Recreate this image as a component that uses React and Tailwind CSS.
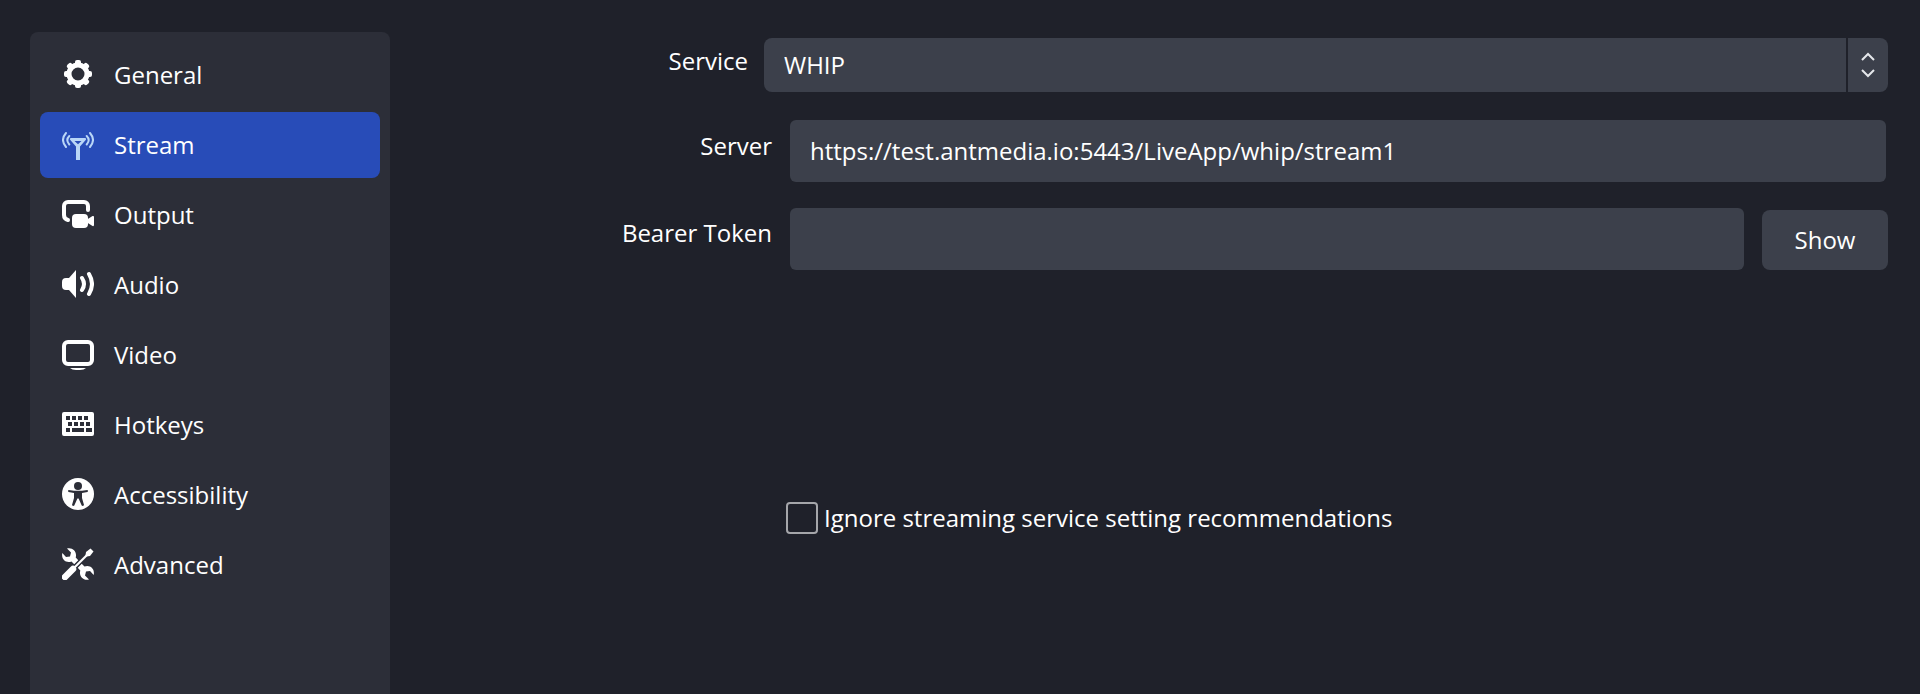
const GeneralIcon = () => (
  <svg viewBox="0 0 32 32" className="mb-0.5 size-8" aria-hidden="true">
    <circle cx="16" cy="16" r="9" fill="none" stroke="currentColor" strokeWidth="5" />
    {[0, 45, 90, 135, 180, 225, 270, 315].map((angle) => (
      <rect
        key={angle}
        x="13"
        y="2"
        width="6"
        height="6"
        rx="2"
        fill="currentColor"
        transform={`rotate(${angle} 16 16)`}
      />
    ))}
  </svg>
);

const StreamIcon = () => (
  <svg viewBox="0 0 32 32" className="mb-0.5 size-8 text-[#b9d6f7]" aria-hidden="true">
    <path
      fill="currentColor"
      fillRule="evenodd"
      d="M9 10H23C24.2 10 24.4 11.3 23.7 12L18 18.5V32H14V18.5L8.3 12C7.6 11.3 7.8 10 9 10ZM12.5 13L16 16.2L19.5 13Z"
    />
    <g fill="none" stroke="currentColor" strokeWidth="2" strokeLinecap="round">
      <path d="M4 5Q-2 12 4 19M7.3 8Q3.3 12 7.3 16.5" />
      <path d="M28 5Q34 12 28 19M24.7 8Q28.7 12 24.7 16.5" />
    </g>
  </svg>
);

const OutputIcon = () => (
  <svg viewBox="0 0 32 32" className="mb-0.5 size-8" aria-hidden="true">
    <path
      d="M26 12V8A4 4 0 0 0 22 4H6A4 4 0 0 0 2 8V17Q2 21 6 22"
      fill="none"
      stroke="currentColor"
      strokeWidth="4"
      strokeLinecap="round"
    />
    <rect x="10" y="16" width="16" height="14" rx="4" fill="currentColor" />
    <path d="M25 21.5L30.5 18Q32 17.5 32 19V27Q32 28.5 30.5 28L25 24.5Z" fill="currentColor" />
  </svg>
);

const AudioIcon = () => (
  <svg viewBox="0 0 32 32" className="mb-0.5 size-8" aria-hidden="true">
    <path d="M14 2V30L7 22H4Q0 22 0 18V14Q0 10 4 10H7Z" fill="currentColor" />
    <path
      d="M20 10Q24 16 20 22M27 6Q33 16 27 26"
      fill="none"
      stroke="currentColor"
      strokeWidth="4"
      strokeLinecap="round"
    />
  </svg>
);

const VideoIcon = () => (
  <svg viewBox="0 0 32 32" className="mb-0.5 size-8" aria-hidden="true">
    <rect x="2" y="4" width="28" height="22" rx="4" fill="none" stroke="currentColor" strokeWidth="4" />
    <path d="M8 30H24Q22 32 18 32H14Q10 32 8 30Z" fill="currentColor" />
  </svg>
);

const HotkeysIcon = () => (
  <svg viewBox="0 0 32 32" className="mb-0.5 size-8" aria-hidden="true">
    <path
      fill="currentColor"
      fillRule="evenodd"
      d="M2 4H30Q32 4 32 6V26Q32 28 30 28H2Q0 28 0 26V6Q0 4 2 4ZM4 8V12H8V8ZM10 8V12H14V8ZM16 8V12H20V8ZM22 8V12H26V8ZM6 14V18H10V14ZM12 14V18H16V14ZM18 14V18H22V14ZM24 14V18H28V14ZM4 20V24H8V20ZM10 20V24H22V20ZM24 20V24H30V20Z"
    />
  </svg>
);

const AccessibilityIcon = () => (
  <svg viewBox="0 0 32 32" className="mb-0.5 size-8" aria-hidden="true">
    <circle cx="16" cy="16" r="16" fill="currentColor" />
    <g className="fill-[#2c2e38]">
      <circle cx="16" cy="8" r="4" />
      <path d="M6.5 12L12 12.7H20L25.5 12Q26.5 13 25.5 14L20 15V20L22 27Q21 28.5 19.7 27.5L16.6 20.5H15.4L12.3 27.5Q11 28.5 10 27L12 20V15L6.5 14Q5.5 13 6.5 12Z" />
    </g>
  </svg>
);

const wrench =
  "M5 0.4C11-1 15.3 4 13.7 9.5L16.5 12.5L12.5 16.5L9.5 13.5C4 15.5-1 11.5 0.3 5L4 9L8 8.6L9 4.5Z";

const AdvancedIcon = () => (
  <svg viewBox="0 0 32 32" className="mb-0.5 size-8" aria-hidden="true">
    <path d={wrench} fill="currentColor" />
    <path d={wrench} fill="currentColor" transform="rotate(180 16 16)" />
    <path d="M10 22L27 5" className="stroke-[#2c2e38]" strokeWidth="5" />
    <path d="M3 29L11 21" stroke="currentColor" strokeWidth="6.5" strokeLinecap="round" />
    <path d="M11 21L27 5" stroke="currentColor" strokeWidth="2.2" />
    <path d="M24 4L28.5 0.5L31.5 3.5L28 8L24.5 8.5L23.5 7.5Z" fill="currentColor" />
  </svg>
);

const sections = [
  { name: "General", Icon: GeneralIcon },
  { name: "Stream", Icon: StreamIcon },
  { name: "Output", Icon: OutputIcon },
  { name: "Audio", Icon: AudioIcon },
  { name: "Video", Icon: VideoIcon },
  { name: "Hotkeys", Icon: HotkeysIcon },
  { name: "Accessibility", Icon: AccessibilityIcon },
  { name: "Advanced", Icon: AdvancedIcon },
];

const Sidebar = ({ active }) => (
  <nav className="mt-8 w-[360px] shrink-0 rounded-t-lg bg-[#2c2e38] p-2.5">
    <ul className="flex flex-col gap-1">
      {sections.map(({ name, Icon }) => (
        <li key={name}>
          <button
            type="button"
            className={`flex h-[66px] w-full items-center gap-5 rounded-lg pl-[22px] text-left ${
              name === active ? "bg-[#284cb8]" : ""
            }`}
          >
            <Icon />
            {name}
          </button>
        </li>
      ))}
    </ul>
  </nav>
);

const StreamSettings = () => (
  <form className="flex min-w-0 flex-1 flex-col pt-[38px] pr-8">
    <div className="flex items-center gap-4">
      <label htmlFor="service" className="w-[358px] shrink-0 pb-2 text-right">
        Service
      </label>
      <div className="relative min-w-0 flex-1">
        <select
          id="service"
          className="block h-[54px] w-full appearance-none rounded-lg bg-[#3c404b] pr-14 pl-5"
        >
          <option>WHIP</option>
        </select>
        <span className="pointer-events-none absolute inset-y-0 right-0 flex w-[42px] items-center justify-center border-l-2 border-[#1f212a] text-gray-200">
          <svg width="14" height="26" viewBox="0 0 14 26" fill="none" stroke="currentColor" strokeWidth="2">
            <path d="M1 8L7 2L13 8M1 18L7 24L13 18" />
          </svg>
        </span>
      </div>
    </div>

    <div className="mt-7 flex items-center gap-[18px] pr-0.5">
      <label htmlFor="server" className="w-[382px] shrink-0 pb-2.5 text-right">
        Server
      </label>
      <input
        id="server"
        type="text"
        defaultValue="https://test.antmedia.io:5443/LiveApp/whip/stream1"
        className="h-[62px] min-w-0 flex-1 rounded-md bg-[#3c404b] px-5 pb-0.5"
      />
    </div>

    <div className="mt-[26px] flex items-end gap-[18px]">
      <label htmlFor="token" className="w-[382px] shrink-0 self-center pb-3 text-right">
        Bearer Token
      </label>
      <input
        id="token"
        type="password"
        className="h-[62px] min-w-0 flex-1 rounded-md bg-[#3c404b] px-5 pb-0.5"
      />
      <button type="button" className="h-[60px] w-[126px] rounded-lg bg-[#3c404b]">
        Show
      </button>
    </div>

    <div className="mt-[232px] flex items-center gap-1.5 pl-[396px]">
      <input
        id="ignore"
        type="checkbox"
        className="size-8 appearance-none rounded border-2 border-[#a5a6aa] checked:bg-[#284cb8]"
      />
      <label htmlFor="ignore">Ignore streaming service setting recommendations</label>
    </div>
  </form>
);

const App = () => (
  <div className="flex min-h-screen bg-[#1f212a] pl-[30px] font-['Open_Sans',sans-serif] text-2xl text-white">
    <Sidebar active="Stream" />
    <StreamSettings />
  </div>
);

export default App;
